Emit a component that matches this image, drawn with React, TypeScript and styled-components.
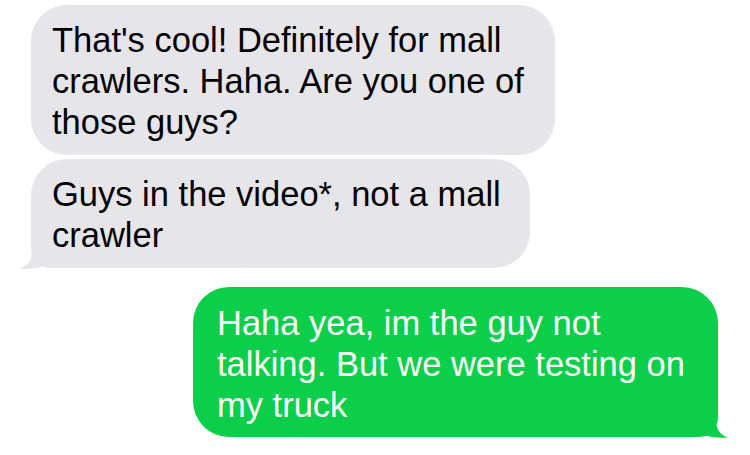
import React from "react";
import styled, { createGlobalStyle, css } from "styled-components";

const GlobalStyle = createGlobalStyle`
  html, body {
    margin: 0;
    padding: 0;
    background: #ffffff;
  }
  body {
    font-family: "Liberation Sans", Arial, sans-serif;
    -webkit-font-smoothing: antialiased;
  }
`;

const GRAY = "#e5e5ea";
const GREEN = "#0bce4a";

const Thread = styled.div`
  width: 750px;
  height: 455px;
  box-sizing: border-box;
  padding-top: 5px;
  display: flex;
  flex-direction: column;
  overflow: hidden;
`;

const Bubble = styled.div<{ $mine?: boolean; $tail?: boolean; $gap: number; $width: number }>`
  position: relative;
  box-sizing: border-box;
  width: ${(p) => p.$width}px;
  margin-top: ${(p) => p.$gap}px;
  margin-left: 31px;
  padding: 15px 0 12px 21px;
  border-radius: 36px;
  background: ${GRAY};
  color: #000000;
  font-size: 34.5px;
  line-height: 41px;
  white-space: nowrap;

  ${(p) =>
    p.$tail &&
    css`
      border-bottom-left-radius: 20px;
    `}

  ${(p) =>
    p.$mine &&
    css`
      margin-left: auto;
      margin-right: 32px;
      padding: 16px 0 11px 24px;
      background: ${GREEN};
      color: #ffffff;
      border-bottom-left-radius: 36px;
      border-bottom-right-radius: ${p.$tail ? 20 : 36}px;
    `}
`;

const Tail = styled.svg<{ $mine?: boolean }>`
  position: absolute;
  bottom: -1px;
  width: 40px;
  height: 30px;
  ${(p) => (p.$mine ? "right: -10px;" : "left: -11px;")}
`;

const BubbleTail: React.FC<{ mine?: boolean }> = ({ mine }) => (
  <Tail $mine={mine} viewBox="0 0 40 30">
    {mine ? (
      <path d="M28 0 L28 11 Q28 26 40 29.5 Q28 30.5 16 27.2 L14 20 L14 0 Z" fill={GREEN} />
    ) : (
      <path d="M12 0 L12 11 Q12 26 0 29.5 Q12 30.5 24 27.2 L26 20 L26 0 Z" fill={GRAY} />
    )}
  </Tail>
);

const messages = [
  {
    lines: ["That's cool! Definitely for mall", "crawlers. Haha. Are you one of", "those guys?"],
    mine: false,
    tail: false,
    gap: 0,
    width: 524,
  },
  {
    lines: ["Guys in the video*, not a mall", "crawler"],
    mine: false,
    tail: true,
    gap: 4,
    width: 499,
  },
  {
    lines: ["Haha yea, im the guy not", "talking. But we were testing on", "my truck"],
    mine: true,
    tail: true,
    gap: 19,
    width: 525,
  },
];

const App: React.FC = () => {
  return (
    <>
      <GlobalStyle />
      <Thread>
        {messages.map((m, i) => (
          <Bubble key={i} $mine={m.mine} $tail={m.tail} $gap={m.gap} $width={m.width}>
            {m.lines.map((line, j) => (
              <React.Fragment key={j}>
                {j > 0 && <br />}
                {line}
              </React.Fragment>
            ))}
            {m.tail && <BubbleTail mine={m.mine} />}
          </Bubble>
        ))}
      </Thread>
    </>
  );
};

export default App;
